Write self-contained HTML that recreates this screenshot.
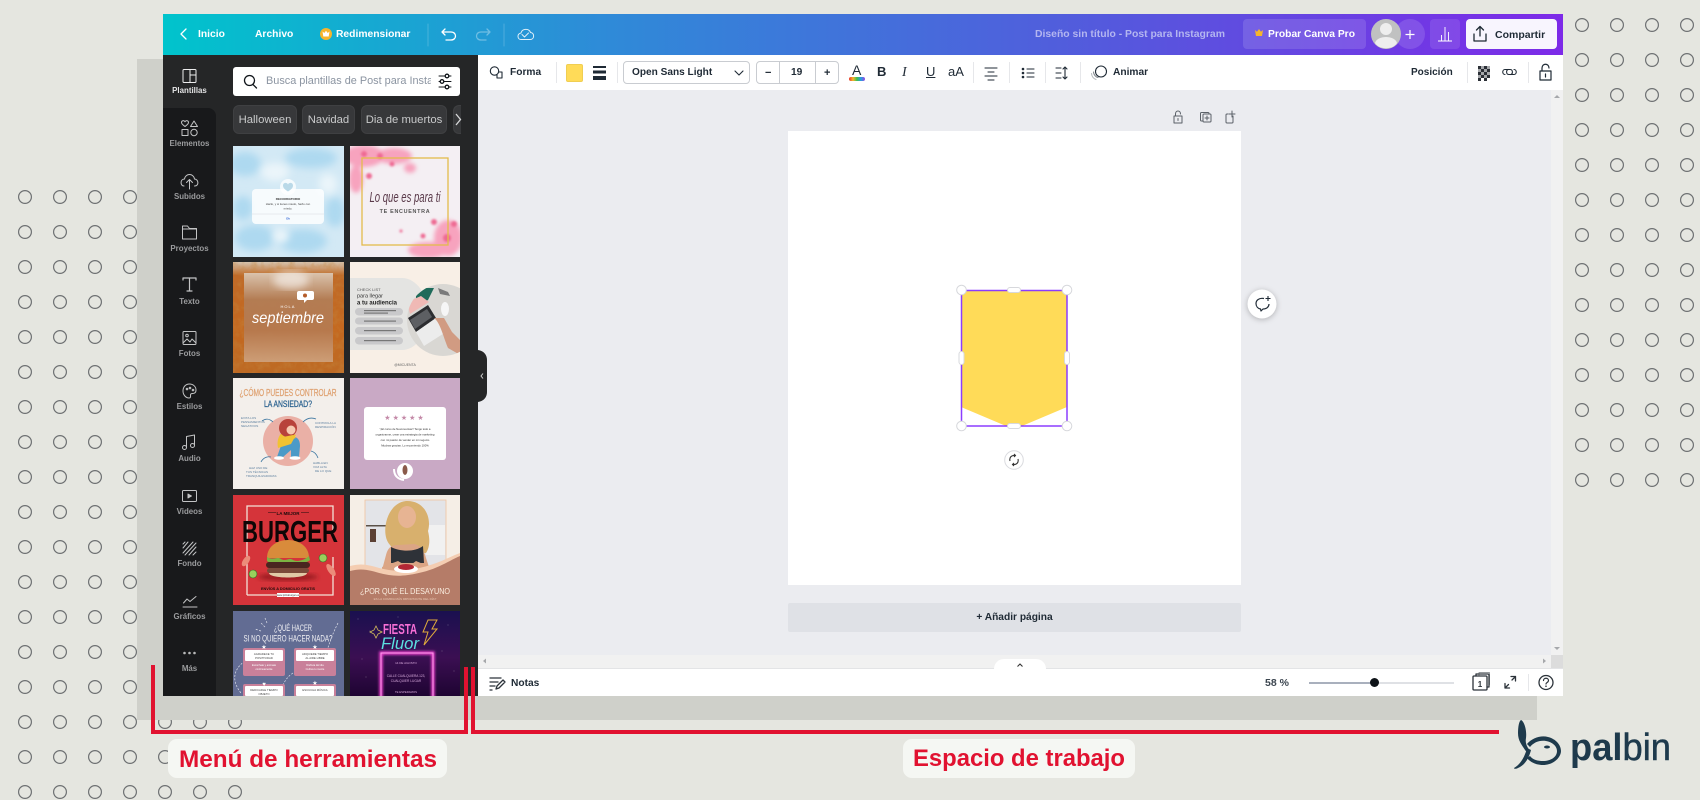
<!DOCTYPE html>
<html lang="es"><head><meta charset="utf-8"><title>Canva</title>
<style>
html,body{margin:0;padding:0;background:#e5e6e0}
#r{position:relative;width:1700px;height:800px;overflow:hidden;background:#e5e6e0;font-family:"Liberation Sans",sans-serif}
.a{position:absolute}
.t{position:absolute;white-space:nowrap;line-height:20px;height:20px}
.w{color:#fff;font-weight:bold;font-size:10.3px}
.d{color:#1f2a35;font-weight:bold;font-size:10.2px}
.l{position:absolute;left:163px;width:53px;text-align:center;font-size:7.9px;font-weight:bold;color:#9b9c9e;line-height:12px}
.chip{position:absolute;top:105px;height:29px;background:#37383a;border:1px solid #3f4042;box-sizing:border-box;border-radius:6px;color:#c9cacb;font-size:11.3px;line-height:29px;text-align:center;white-space:nowrap}
.th{position:absolute;display:block}
.div{position:absolute;width:1px;background:#e6e7ea}
svg text{font-family:"Liberation Sans",sans-serif}
</style></head><body><div id="r">

<svg class="a" style="left:0;top:0" width="1700" height="800" viewBox="0 0 1700 800">
<defs><pattern id="dots" x="7.5" y="179.5" width="35" height="35" patternUnits="userSpaceOnUse"><circle cx="17.5" cy="17.5" r="6.4" fill="none" stroke="#6d7072" stroke-width="1.2"/></pattern>
<pattern id="dots2" x="1564.5" y="7.5" width="35" height="35" patternUnits="userSpaceOnUse"><circle cx="17.5" cy="17.5" r="6.4" fill="none" stroke="#6d7072" stroke-width="1.2"/></pattern>
<filter id="b2"><feGaussianBlur stdDeviation="2"/></filter><filter id="b4"><feGaussianBlur stdDeviation="4"/></filter><filter id="b1"><feGaussianBlur stdDeviation="1"/></filter>
<filter id="n1" x="0" y="0" width="100%" height="100%"><feTurbulence type="fractalNoise" baseFrequency="0.16" numOctaves="3" seed="4"/><feColorMatrix values="0 0 0 0 .55  0 0 0 0 .24  0 0 0 0 .05  1.8 0 0 0 -.7"/></filter>
<filter id="gl" x="-30%" y="-30%" width="160%" height="160%"><feGaussianBlur stdDeviation="1.4"/></filter>
<clipPath id="c4"><circle cx="93" cy="58" r="36"/></clipPath>
</defs>
<rect x="7.5" y="179.5" width="140" height="525.5" fill="url(#dots)"/>
<rect x="7.5" y="704.5" width="245" height="95.5" fill="url(#dots)"/>
<rect x="1564.5" y="7.5" width="140" height="490" fill="url(#dots2)"/>
</svg>

<div class="a" style="left:137px;top:59px;width:1400px;height:661px;background:#cfd0ca"></div>

<!-- App -->
<div class="a" style="left:163px;top:14px;width:1400px;height:41px;background:linear-gradient(90deg,#00c4cc,#2f8ad8 32%,#5558dd 68%,#7d2ae8)"></div>
<div class="a" style="left:163px;top:55px;width:315px;height:641px;background:#252627"></div>
<div class="a" style="left:163px;top:108px;width:53px;height:588px;background:#18191b;border-top-right-radius:8px"></div>
<div class="a" style="left:478px;top:55px;width:1085px;height:35px;background:#fff"></div>
<div class="a" style="left:478px;top:90px;width:1085px;height:578px;background:#ebecf0"></div>
<div class="a" style="left:1551px;top:90px;width:12px;height:565px;background:#f1f1f1"></div>
<div class="a" style="left:478px;top:655px;width:1073px;height:13px;background:#f1f1f1"></div>
<div class="a" style="left:1551px;top:655px;width:12px;height:13px;background:#dcdcdc"></div>
<div class="a" style="left:478px;top:668px;width:1085px;height:28px;background:#fff;border-top:1px solid #e3e4e6;box-sizing:border-box"></div>
<div class="a" style="left:994px;top:659px;width:52px;height:10px;background:#fff;border-radius:14px 14px 0 0"></div>

<!-- Canvas -->
<div class="a" style="left:788px;top:131px;width:453px;height:454px;background:#fff"></div>
<div class="a" style="left:788px;top:603px;width:453px;height:29px;background:#dfe1e6;border-radius:2px;text-align:center;line-height:29px;font-size:10.2px;font-weight:bold;color:#1f2a35">+ Añadir página</div>

<!-- Top bar text -->
<div class="t w" style="left:198px;top:25px">Inicio</div>
<div class="t w" style="left:255px;top:25px">Archivo</div>
<div class="t w" style="left:336px;top:25px">Redimensionar</div>
<div class="t" style="left:1035px;top:25px;color:#b4b6f0;font-size:10.4px;font-weight:bold">Diseño sin título - Post para Instagram</div>
<div class="a" style="left:1243px;top:19px;width:123px;height:30px;border-radius:4px;background:rgba(255,255,255,.13)"></div>
<div class="t w" style="left:1268px;top:25px">Probar Canva Pro</div>
<div class="a" style="left:1395px;top:19px;width:30px;height:30px;border-radius:50%;background:rgba(255,255,255,.13)"></div>
<div class="a" style="left:1430px;top:19px;width:30px;height:30px;border-radius:4px;background:rgba(255,255,255,.1)"></div>
<div class="a" style="left:1466px;top:19px;width:91px;height:30px;border-radius:4px;background:#f8f5fe"></div>
<div class="t d" style="left:1495px;top:25px;font-size:10.5px">Compartir</div>

<!-- Toolbar text -->
<div class="t d" style="left:510px;top:63px">Forma</div>
<div class="a" style="left:566px;top:64px;width:17px;height:18px;background:#ffdb58;border-radius:2px;box-shadow:inset 0 0 0 1px rgba(0,0,0,.06)"></div>
<div class="a" style="left:623px;top:61px;width:127px;height:23px;border:1px solid #c9ccd1;border-radius:4px;box-sizing:border-box"></div>
<div class="t d" style="left:632px;top:63px;font-size:10.1px">Open Sans Light</div>
<div class="a" style="left:756px;top:61px;width:83px;height:23px;border:1px solid #c9ccd1;border-radius:4px;box-sizing:border-box"></div>
<div class="a" style="left:779px;top:61px;width:1px;height:23px;background:#c9ccd1"></div>
<div class="a" style="left:815px;top:61px;width:1px;height:23px;background:#c9ccd1"></div>
<div class="t d" style="left:791px;top:63px">19</div>
<div class="t d" style="left:765px;top:63px;font-size:11px">−</div>
<div class="t d" style="left:824px;top:63px;font-size:11px">+</div>
<div class="t" style="left:877px;top:62px;font-size:13px;font-weight:bold;color:#1f2a35">B</div>
<div class="t" style="left:902px;top:63px;font-size:14px;font-style:italic;font-family:'Liberation Serif',serif;color:#1f2a35">I</div>
<div class="t" style="left:926px;top:62px;font-size:13px;color:#1f2a35;text-decoration:underline">U</div>
<div class="t" style="left:948px;top:62px;font-size:13px;color:#1f2a35">aA</div>
<div class="t d" style="left:1113px;top:63px">Animar</div>
<div class="t d" style="left:1411px;top:63px;font-size:10px">Posición</div>
<div class="div" style="left:556px;top:62px;height:21px"></div><div class="div" style="left:617px;top:62px;height:21px"></div>
<div class="div" style="left:973px;top:62px;height:21px"></div><div class="div" style="left:1009px;top:62px;height:21px"></div>
<div class="div" style="left:1045px;top:62px;height:21px"></div><div class="div" style="left:1080px;top:62px;height:21px"></div>
<div class="div" style="left:1467px;top:62px;height:21px"></div><div class="div" style="left:1528px;top:62px;height:21px"></div>
<div class="t" style="left:852px;top:60px;font-size:14px;color:#1f2a35">A</div>
<div class="a" style="left:849px;top:77px;width:16px;height:4px;border-radius:2px;background:linear-gradient(90deg,#e5342c,#f7b52b,#3cc04f,#2b9be5,#9a45e0)"></div>

<!-- Footer text -->
<div class="t d" style="left:511px;top:674px">Notas</div>
<div class="t" style="left:1265px;top:673px;font-size:10.5px;font-weight:bold;color:#3c4650">58 %</div>
<div class="a" style="left:1309px;top:682px;width:65px;height:1.5px;background:#a9b0bd"></div>
<div class="a" style="left:1374px;top:682px;width:80px;height:1.5px;background:#dfe1e5"></div>
<div class="a" style="left:1369.5px;top:677.5px;width:9px;height:9px;border-radius:50%;background:#0e1318"></div>
<div class="div" style="left:1528px;top:674px;height:17px"></div>

<!-- Search + chips -->
<div class="a" style="left:233px;top:67px;width:227px;height:29px;background:#fff;border-radius:3px"></div>
<div class="t" style="left:266px;top:71px;width:165px;overflow:hidden;font-size:10.9px;color:#8b94a1">Busca plantillas de Post para Instagram</div>
<div class="chip" style="left:233px;width:64px">Halloween</div>
<div class="chip" style="left:302px;width:53px">Navidad</div>
<div class="chip" style="left:361px;width:86px">Dia de muertos</div>
<div class="chip" style="left:453px;width:8px;border-right:0;border-radius:6px 0 0 6px"></div>

<!-- Rail labels -->
<div class="l" style="top:85px;color:#e4e4e5">Plantillas</div>
<div class="l" style="top:138px">Elementos</div>
<div class="l" style="top:191px">Subidos</div>
<div class="l" style="top:243px">Proyectos</div>
<div class="l" style="top:296px">Texto</div>
<div class="l" style="top:348px">Fotos</div>
<div class="l" style="top:401px">Estilos</div>
<div class="l" style="top:453px">Audio</div>
<div class="l" style="top:506px">Videos</div>
<div class="l" style="top:558px">Fondo</div>
<div class="l" style="top:611px">Gráficos</div>
<div class="l" style="top:663px">Más</div>

<!-- Thumbs -->
<svg class="th" style="left:233px;top:146px" width="111" height="111" viewBox="0 0 111 111"><rect width="111" height="111" fill="#d3e9f5"/><g filter="url(#b4)" fill="#aed9f0"><ellipse cx="12" cy="18" rx="16" ry="12"/><ellipse cx="78" cy="12" rx="26" ry="10"/><ellipse cx="22" cy="92" rx="20" ry="13"/><ellipse cx="70" cy="95" rx="24" ry="12"/><ellipse cx="102" cy="66" rx="10" ry="15"/><ellipse cx="10" cy="62" rx="10" ry="12"/></g><g filter="url(#b4)" fill="#ebf5fa"><ellipse cx="42" cy="26" rx="14" ry="9"/><ellipse cx="95" cy="38" rx="9" ry="10"/><ellipse cx="48" cy="90" rx="8" ry="7"/></g><circle cx="55" cy="41" r="8" fill="#fff" opacity=".75"/><rect x="19" y="43" width="72" height="35" rx="4" fill="#fff" opacity=".82"/><path d="M55 45.5c-3-2-5-3.5-5-6 0-3 4-3.500 5-1 1-2.500 5-2 5 1 0 2.500-2 4-5 6z" fill="#bad9e8"/><text x="55" y="54" font-size="3" font-weight="bold" text-anchor="middle" fill="#333">RECORDATORIO</text><text x="55" y="59" font-size="2.900" text-anchor="middle" fill="#444">Hazlo, y si tienes miedo, hazlo con</text><text x="55" y="63.500" font-size="2.900" text-anchor="middle" fill="#444">miedo.</text><path d="M19 68h72" stroke="#cfd3d6" stroke-width=".4"/><text x="55" y="73.500" font-size="3" font-weight="bold" text-anchor="middle" fill="#3b6dd8">Ok</text></svg>

<svg class="th" style="left:350px;top:146px" width="110" height="111" viewBox="0 0 110 111"><rect width="110" height="111" fill="#f4eff3"/><g filter="url(#b2)" fill="#f7a3be"><ellipse cx="14" cy="10" rx="20" ry="11"/><ellipse cx="44" cy="10" rx="18" ry="8"/><ellipse cx="6" cy="33" rx="7" ry="14"/><ellipse cx="98" cy="92" rx="14" ry="18"/><ellipse cx="78" cy="104" rx="20" ry="8"/><ellipse cx="60" cy="22" rx="6" ry="5"/></g><g fill="#ee6a93" filter="url(#b1)"><circle cx="19" cy="30" r="3"/><circle cx="30" cy="10" r="3"/><circle cx="14" cy="8" r="3"/><circle cx="97" cy="92" r="4"/><circle cx="84" cy="76" r="3"/><circle cx="73" cy="90" r="2.500"/><circle cx="51" cy="85" r="1.500"/><circle cx="42" cy="18" r="2.500"/><circle cx="104" cy="78" r="3"/></g><rect x="12" y="12" width="86" height="87" fill="none" stroke="#e3bb4c" stroke-width="1.300"/><text x="55" y="56" font-size="15" font-style="italic" font-family="Liberation Serif" text-anchor="middle" fill="#5a3a4a" textLength="71" lengthAdjust="spacingAndGlyphs">Lo que es para ti</text><text x="55" y="67" font-size="5.400" font-weight="bold" font-family="Liberation Serif" text-anchor="middle" fill="#555" letter-spacing=".7">TE ENCUENTRA</text></svg>

<svg class="th" style="left:233px;top:262px" width="111" height="111" viewBox="0 0 111 111"><defs><linearGradient id="g3" x1="0" y1="0" x2="0" y2="1"><stop offset="0" stop-color="#d6c4b0"/><stop offset=".12" stop-color="#bf6a28"/><stop offset=".6" stop-color="#c4681f"/><stop offset="1" stop-color="#bd6a24"/></linearGradient><linearGradient id="g3b" x1="0" y1="0" x2="0" y2="1"><stop offset="0" stop-color="#dcc9b6"/><stop offset=".3" stop-color="#b27d56"/><stop offset=".65" stop-color="#b67a50"/><stop offset="1" stop-color="#cea17c"/></linearGradient></defs><rect width="111" height="111" fill="url(#g3)"/><rect width="111" height="111" filter="url(#n1)" opacity=".55"/><rect x="11" y="11" width="89" height="89" fill="url(#g3b)" opacity=".93"/><ellipse cx="58" cy="18" rx="18" ry="9" fill="#fff" opacity=".55" filter="url(#b4)"/><path d="M66 29h13a2 2 0 0 1 2 2v5a2 2 0 0 1-2 2h-5l-3 3v-3h-5a2 2 0 0 1-2-2v-5a2 2 0 0 1 2-2z" fill="#fff"/><circle cx="72" cy="33.500" r="2" fill="#b55d2a"/><text x="55" y="46" font-size="4" text-anchor="middle" fill="#fff" letter-spacing="1">HOLA</text><text x="55" y="61" font-size="16" font-style="italic" font-family="Liberation Serif" text-anchor="middle" fill="#fff" textLength="72" lengthAdjust="spacingAndGlyphs">septiembre</text></svg>

<svg class="th" style="left:350px;top:262px" width="110" height="111" viewBox="0 0 110 111"><rect width="110" height="111" fill="#f8efe6"/><path d="M0 16h52c14 0 26 16 26 36s-12 36-26 36H0z" fill="#e4e4e2"/><circle cx="93" cy="58" r="36" fill="#d9d7d3"/><g clip-path="url(#c4)"><path d="M66 26h18l-6 12-12 6z" fill="#1f6b5a"/><path d="M57 40l14-6 8 6-19 12z" fill="#f0b9b5"/><path d="M58 56l20-13 8 13-20 14z" fill="#2c2d30"/><path d="M60 58l17-11 5 8-17 12z" fill="#5d5f63"/><path d="M66 70l20-14 10 14-22 14z" fill="#ececec"/><path d="M84 56c6 4 9 18 14 30l14 8v-14l-10-10-8-14z" fill="#d19b82"/><ellipse cx="95" cy="47" rx="4" ry="7" fill="#f6f6f6"/><path d="M88 26l10 4 2 4-10-2z" fill="#7a7a7a"/></g><text x="7" y="29" font-size="4" font-family="Liberation Serif" fill="#555">CHECK LIST</text><text x="7" y="35.500" font-size="5.500" font-family="Liberation Serif" fill="#333">para llegar</text><text x="7" y="42.500" font-size="6" font-weight="bold" font-family="Liberation Serif" fill="#222">a tu audiencia</text><g fill="#c9c9cb"><rect x="5" y="46" width="48" height="7.500" rx="3.700"/><rect x="5" y="55.500" width="48" height="7" rx="3.500"/><rect x="5" y="65" width="48" height="7.500" rx="3.700"/><rect x="5" y="75" width="48" height="7.500" rx="3.700"/></g><g fill="#777"><rect x="14" y="48" width="32" height="1.200"/><rect x="14" y="50.500" width="24" height="1.200"/><rect x="14" y="58.500" width="32" height="1.200"/><rect x="14" y="68" width="32" height="1.200"/><rect x="14" y="78" width="32" height="1.200"/></g><text x="55" y="104" font-size="3.500" text-anchor="middle" fill="#666">@MICUENTA</text></svg>

<svg class="th" style="left:233px;top:378px" width="111" height="111" viewBox="0 0 111 111"><rect width="111" height="111" fill="#f3efeb"/><text x="55" y="18" font-size="10" text-anchor="middle" fill="#dfa272" stroke="#dfa272" stroke-width=".25" textLength="97" lengthAdjust="spacingAndGlyphs">¿CÓMO PUEDES CONTROLAR</text><text x="55" y="29" font-size="9.500" text-anchor="middle" fill="#29618f" stroke="#29618f" stroke-width=".25" textLength="48" lengthAdjust="spacingAndGlyphs">LA ANSIEDAD?</text><circle cx="55" cy="63" r="25" fill="#eab0a6"/><path d="M50 62C60 56 67 58 67 68L66 79 58 79 58 72 50 79 44 79Z" fill="#4c9ac7"/><path d="M45 70C43 60 48 53 54 53L63 57 58 66Z" fill="#f1c232"/><ellipse cx="55" cy="50" rx="9" ry="9" fill="#b8423a"/><circle cx="58" cy="52" r="4.500" fill="#f6c9b0"/><path d="M50 59l10-2 3 3-10 3z" fill="#f1c232"/><ellipse cx="46" cy="80" rx="5" ry="1.800" fill="#fff"/><ellipse cx="62" cy="80" rx="5.500" ry="1.800" fill="#fff"/><g font-size="3" fill="#5b7e9e"><text x="8" y="41">EVITA LOS</text><text x="8" y="45">PENSAMIENTOS</text><text x="8" y="49">NEGATIVOS</text><text x="82" y="46">CONTROLA LA</text><text x="82" y="50">RESPIRACIÓN</text><text x="16" y="91">HAZ USO DE</text><text x="13" y="95">TUS TÉCNICAS</text><text x="13" y="99">TRANQUILIZADORAS</text><text x="80" y="86">HABLA EN</text><text x="80" y="90">VOZ ALTA</text><text x="82" y="94">DE LO QUE</text></g><g fill="none" stroke="#39749f" stroke-width=".8"><path d="M29 43c4-3 8-2 11 1"/><path d="M70 44c4-4 8-5 13-3"/><path d="M28 84c2-4 6-6 10-5"/><path d="M78 73c4 1 6 4 7 7"/></g></svg>

<svg class="th" style="left:350px;top:378px" width="110" height="111" viewBox="0 0 110 111"><rect width="110" height="111" fill="#c9a9c5"/><rect x="14" y="29" width="82" height="53" rx="3" fill="#fff"/><text x="55" y="42" font-size="7" text-anchor="middle" fill="#c48aa8" letter-spacing="2">★★★★★</text><g font-size="2.800" text-anchor="middle" fill="#333"><text x="55" y="52">"¡El curso de Neuroventas!! Tengo todo a</text><text x="55" y="57.500">organizarme, crear una estrategia de marketing</text><text x="55" y="63">con mi pasión de vender en mi negocio</text><text x="55" y="68.500">Muchas gracias. Lo recomiendo 100%</text></g><circle cx="55" cy="93" r="8" fill="#fff"/><ellipse cx="55" cy="92" rx="2.500" ry="5" fill="#8a5a4a"/><path d="M44 91c0 6 3 10 10 11" fill="none" stroke="#fff" stroke-width="2"/></svg>

<svg class="th" style="left:233px;top:495px" width="111" height="110" viewBox="0 0 111 110"><rect width="111" height="110" fill="#d5343a"/><path d="M14 100V11h86v30M14 100h86V62" fill="none" stroke="#f3e2d8" stroke-width="1.300"/><text x="55" y="20" font-size="4.500" font-weight="bold" text-anchor="middle" fill="#1c0c0c">LA MEJOR</text><path d="M35 17.500h8M68 17.500h8" stroke="#1c0c0c" stroke-width=".6"/><text x="9" y="47" font-size="31" font-weight="bold" fill="#0e0606" textLength="96" lengthAdjust="spacingAndGlyphs">BURGER</text><ellipse cx="55" cy="82" rx="30" ry="4" fill="#9c1d23" filter="url(#b2)"/><path d="M34 63c0-24 42-24 42 0z" fill="#d98b3b"/><path d="M34 62c6 4 10-1 14 2 5 3 8-2 12 1 4 2 10 1 16-4l1 4c-4 5-38 6-43 1z" fill="#7cb342"/><rect x="33" y="67" width="44" height="6" rx="3" fill="#4a2520"/><rect x="34" y="73" width="42" height="5" rx="2.500" fill="#7a4a3a"/><path d="M36 78h38c0 6-38 6-38 0z" fill="#e0c9a6"/><ellipse cx="13" cy="66" rx="3" ry="6" fill="#ec8c7a" transform="rotate(35 13 66)"/><ellipse cx="98" cy="75" rx="3" ry="7" fill="#ec8c7a" transform="rotate(-35 98 75)"/><circle cx="20" cy="79" r="4" fill="#99cf5c" stroke="#326b25" stroke-width=".6"/><circle cx="90" cy="63" r="4" fill="#99cf5c" stroke="#326b25" stroke-width=".6"/><text x="55" y="95" font-size="3.800" font-weight="bold" text-anchor="middle" fill="#1c0c0c">ENVÍOS A DOMICILIO GRATIS</text><rect x="44" y="98" width="22" height="4" fill="#fff"/><text x="55" y="101" font-size="2.500" text-anchor="middle" fill="#333">www.pizzaburger.es</text></svg>

<svg class="th" style="left:350px;top:495px" width="110" height="110" viewBox="0 0 110 110"><rect width="110" height="110" fill="#f5eee6"/><rect x="15" y="5" width="81" height="75" fill="#e3e4e8" stroke="#f0c39f" stroke-width=".8"/><rect x="16" y="30" width="20" height="1.500" fill="#5b5148"/><rect x="20" y="34" width="6" height="13" fill="#5c4034"/><rect x="76" y="30" width="19" height="30" fill="#f1f1f1"/><path d="M40 50C30 40 36 8 56 6c18-1 26 16 22 30 2 8 2 16-2 22H46z" fill="#d8b06d"/><ellipse cx="57" cy="22" rx="9" ry="11" fill="#e7b493"/><path d="M36 60c2-8 6-10 12-10l16-1c6 1 10 6 12 14l4 12H32z" fill="#dba585"/><path d="M41 52c10 5 24 5 32-1l1 17H41z" fill="#2e3238"/><path d="M32 72l16-6 10 6 8-6 14 6-2 8H32z" fill="#dba585"/><path d="M0 75c22-6 30 8 58 4s40-16 52-20v51H0z" fill="#b57c68"/><path d="M0 71c22-6 30 8 58 4 28-4 38-12 52-17v3c-14 6-24 15-52 19-28 4-36-10-58-4z" fill="#f4cdb2"/><ellipse cx="56" cy="74" rx="12" ry="4" fill="#fff"/><ellipse cx="56" cy="72" rx="8" ry="3" fill="#b32735"/><text x="55" y="99" font-size="8" text-anchor="middle" fill="#fbeee0" textLength="90" lengthAdjust="spacingAndGlyphs">¿POR QUÉ EL DESAYUNO</text><text x="55" y="105" font-size="3" text-anchor="middle" fill="#e9c8b4">ES LA COMIDA MÁS IMPORTANTE DEL DÍA?</text></svg>

<svg class="th" style="left:233px;top:611px" width="111" height="85" viewBox="0 0 111 85"><rect width="111" height="85" fill="#626c93"/><text x="60" y="20" font-size="9" text-anchor="middle" fill="#f0f0f4" textLength="38" lengthAdjust="spacingAndGlyphs">¿QUÉ HACER</text><text x="55" y="30.500" font-size="9" text-anchor="middle" fill="#f0f0f4" textLength="89" lengthAdjust="spacingAndGlyphs">SI NO QUIERO HACER NADA?</text><g stroke="#dfe1ea" stroke-width=".7" fill="none" stroke-dasharray="2 1.500"><path d="M32 16l-4-4M34 12l-2-5M28 20l-6-2"/><path d="M105 12C96 30 96 36 90 50"/><path d="M12 50C-2 60 0 72 8 82"/><path d="M60 62c-6 4-8 8-10 12"/></g><g fill="#c9809a"><rect x="10" y="37" width="42" height="28" rx="2"/><rect x="61" y="37" width="42" height="28" rx="2"/><rect x="10" y="73" width="42" height="20" rx="2"/><rect x="61" y="73" width="42" height="20" rx="2"/></g><g fill="#fff"><rect x="12" y="39" width="38" height="11" rx="1"/><rect x="63" y="39" width="38" height="11" rx="1"/><rect x="12" y="75" width="38" height="10" rx="1"/><rect x="63" y="75" width="38" height="10" rx="1"/></g><g fill="#fff" font-size="6" text-anchor="middle"><text x="31" y="38">★</text><text x="82" y="38">★</text><text x="31" y="75">♥</text><text x="82" y="74">★</text></g><g font-size="2.800" text-anchor="middle" fill="#444"><text x="31" y="44">AGRADECE TU</text><text x="31" y="48">POSITIVIDAD</text><text x="82" y="44">ADQUIERE TIEMPO</text><text x="82" y="48">AL AIRE LIBRE</text><text x="31" y="80">DEDICARLE TIEMPO</text><text x="31" y="84">OBJETO</text><text x="82" y="80">ESCUCHA MÚSICA</text></g><g font-size="2.600" text-anchor="middle" fill="#fff"><text x="31" y="55">Escúchate y anímate</text><text x="31" y="59">continuamente</text><text x="82" y="55">Disfruta del día</text><text x="82" y="59">Cultiva tu mente</text></g></svg>

<svg class="th" style="left:350px;top:611px" width="110" height="85" viewBox="0 0 110 85"><defs><linearGradient id="g10" x1="0" y1="0" x2="0" y2="1"><stop offset="0" stop-color="#1a1050"/><stop offset=".55" stop-color="#3b0f52"/><stop offset="1" stop-color="#1e0432"/></linearGradient></defs><rect width="110" height="85" fill="url(#g10)"/><g fill="#ddd" opacity=".7"><circle cx="8" cy="8" r=".4"/><circle cx="20" cy="20" r=".4"/><circle cx="98" cy="14" r=".4"/><circle cx="92" cy="40" r=".4"/><circle cx="12" cy="48" r=".4"/><circle cx="104" cy="60" r=".4"/><circle cx="48" cy="6" r=".4"/><circle cx="16" cy="66" r=".4"/></g><rect x="31" y="42" width="52" height="60" fill="none" stroke="#f03fd0" stroke-width="3.500" filter="url(#gl)"/><rect x="31" y="42" width="52" height="60" fill="none" stroke="#ff9bec" stroke-width="1"/><text x="50" y="23" font-size="15" font-weight="bold" text-anchor="middle" fill="#f76fd6" textLength="34" lengthAdjust="spacingAndGlyphs">FIESTA</text><text x="50" y="38" font-size="17" font-style="italic" font-family="Liberation Serif" text-anchor="middle" fill="#5ce0e0" textLength="38" lengthAdjust="spacingAndGlyphs">Fluor</text><path d="M78 9h9l-5 9h5l-13 16 4-13h-5z" fill="none" stroke="#e0ac3c" stroke-width="1"/><path d="M26 15l2 4 4 2-4 2-2 4-2-4-4-2 4-2z" fill="none" stroke="#d8c25c" stroke-width=".8"/><g fill="#d5a8d9" text-anchor="middle"><text x="56" y="53" font-size="3">14 DE AGOSTO</text><text x="56" y="66" font-size="3.200">CALLE CUALQUIERA 123,</text><text x="56" y="71" font-size="3.200">CUALQUIER LUGAR</text><text x="56" y="82" font-size="2.800">TE ESPERAMOS</text></g></svg>

<!-- Icons overlay -->
<svg class="a" style="left:0;top:0;pointer-events:none" width="1700" height="800" viewBox="0 0 1700 800">
<!-- top bar -->
<g fill="none" stroke="#fff" stroke-width="1.300" stroke-linecap="round" stroke-linejoin="round">
<path d="M186 29l-5 5 5 5"/>
<path d="M445 29l-3 3 3 3M442 32h9c6 0 6 8 0 8h-5"/>
<path d="M487 29l3 3-3 3M490 32h-9c-6 0-6 8 0 8h5" opacity=".35"/>
<path d="M521 39.500c-3.500 0-4.500-5.500 0-6.500 1-4.500 8-5 9.500-.5 4 0 4.500 7-.5 7zM522 34.500l2.500 2.500 4-4" stroke-width="1" opacity=".85"/>
<path d="M428 24v22M504 24v22" stroke="#fff" stroke-opacity=".2" stroke-width="1"/>
</g>
<circle cx="326" cy="34" r="6" fill="#f7b52b"/><path d="M322.500 31.500l1.800 1.500 1.700-2.300 1.700 2.300 1.800-1.500-.8 5h-5.400z" fill="#fff"/>
<path d="M1255 30l2 1.800 2-2.800 2 2.800 2-1.800-1 6h-6z" fill="#f7b52b"/>
<path d="M1410 30v9M1405.500 34.500h9" stroke="#fff" stroke-width="1.200"/>
<circle cx="1386" cy="34" r="15" fill="#c0c1c1"/><circle cx="1386" cy="29" r="6" fill="#eee"/><path d="M1375 43c2-8 20-8 22 0-4 7-18 7-22 0z" fill="#eee"/>
<path d="M1438 41h14M1441.500 41v-6M1445 41V27M1448.500 41v-9" stroke="#fff" stroke-width=".9" fill="none"/>
<g fill="none" stroke="#1f2a35" stroke-width="1.300" stroke-linecap="round" stroke-linejoin="round"><path d="M1474 34v7h12v-7M1480 36v-9M1476.500 30l3.500-3.500 3.500 3.500"/></g>

<!-- rail -->
<g fill="none" stroke="#c3c4c5" stroke-width="1" stroke-linejoin="round" stroke-linecap="round">
<g stroke="#ededee"><rect x="183" y="69.500" width="13" height="13" rx="1"/><path d="M190 69.500v13M190 75h6"/></g>
<path d="M185 126.500c-2-1.500-3.500-2.500-3.500-4 0-2 2.500-2.500 3.500-.8 1-1.700 3.500-1.200 3.500.8 0 1.500-1.500 2.500-3.500 4zM194 121l3.500 5.500h-7z"/><rect x="182" y="129.500" width="6" height="6"/><circle cx="194" cy="132.500" r="3.200"/>
<path d="M184 186c-4 0-4-7 .5-7 1-6 9-6 10 0 4 0 5 7 0 7M189.500 189v-9M186.500 182.500l3-3 3 3"/>
<path d="M182.500 239v-13h5l2 2.500h7v10.500zM182.500 229h14"/>
<path d="M183 280v-2h13v2M189.500 278v13M187 291h5" stroke-width="1.200"/>
<rect x="183" y="331.500" width="13" height="13" rx="1"/><circle cx="187" cy="335.500" r="1.300"/><path d="M183 343l4-4 3 3 2-3 4 4"/>
<path d="M189.500 384c-4 0-6.500 3-6.500 7s3 7 6 7c2 0 1.500-2 1.500-3s1-1.500 2-1.500c2 0 3.500-1 3.500-3.500 0-3.500-3-6-6.500-6z"/><circle cx="187" cy="389" r=".8"/><circle cx="190" cy="388" r=".8"/><circle cx="193" cy="390" r=".8"/>
<path d="M186.500 447v-10.500l8-1.500v10"/><circle cx="184.500" cy="447.500" r="2"/><circle cx="192.500" cy="445.500" r="2"/>
<rect x="182.500" y="490.500" width="14" height="11" rx="1"/><path d="M188 494v4l3.500-2z" fill="#c3c4c5"/>
<path d="M183 548l5-6M183 553l10-11M185 555l11-12M189 555l7-8M193 555l3-3M183 544l2-2" stroke-width="1"/>
<path d="M183 607h14M183.500 603l3.500-4 3 2.500 6-5"/>
</g>
<g fill="#b8b9ba"><circle cx="184.500" cy="653" r="1.300"/><circle cx="189.500" cy="653" r="1.300"/><circle cx="194.500" cy="653" r="1.300"/></g>
<!-- search icons -->
<g fill="none" stroke="#10151a" stroke-width="1.300" stroke-linecap="round"><circle cx="249.500" cy="80.500" r="5"/><path d="M253 84.500l3.500 3.500"/><path d="M439 76h12M439 81.500h12M439 87h12" stroke-width="1"/><circle cx="447" cy="76" r="1.800" fill="#fff"/><circle cx="442" cy="81.500" r="1.800" fill="#fff"/><circle cx="447" cy="87" r="1.800" fill="#fff"/></g>
<path d="M456 114l4.500 5.500-4.500 5.500" fill="none" stroke="#d7d8d9" stroke-width="1.300"/>
<!-- collapse -->
<path d="M478 350c6 1 9 5 9 10v32c0 5-3 9-9 10z" fill="#252627"/><path d="M483 373.500l-2 2.500 2 2.500" fill="none" stroke="#d0d0d0" stroke-width="1"/>
<!-- toolbar -->
<g fill="none" stroke="#1f2a35" stroke-width="1.100" stroke-linecap="round" stroke-linejoin="round">
<circle cx="494.500" cy="71" r="4.200"/><path d="M497 75v3h5v-6h-2.500"/>
<path d="M735 71l4 4 4-4"/>
<path d="M985 68h12M988 72h6M985 76h12M988 80h6"/>
<path d="M1027 69h7M1027 73h7M1027 77h7"/>
<path d="M1056 68h5M1056 73h5M1056 78h5M1065 67v12M1063 69l2-2 2 2M1063 77l2 2 2-2"/>
<circle cx="1101" cy="71.500" r="5.500"/><path d="M1098 77.500a6 6 0 0 1-4.500-5.500" opacity=".55"/><path d="M1096 79.500a7 7 0 0 1-4.500-6" opacity=".3"/>
<path d="M1505 74.500c-3 0-3-5 0-5h5c3 0 3 4 1 5M1514 69.500c3 0 3 5 0 5h-5c-3 0-3-4-1-5"/>
<path d="M1540 71v9h11v-9zM1542 71v-3c0-5 7-5 7 0M1545.500 74v3" stroke-width="1.200"/>
</g>
<g fill="#1f2a35"><rect x="593" y="66" width="13" height="2"/><rect x="593" y="70.500" width="13" height="3"/><rect x="593" y="76" width="13" height="4"/><circle cx="1023" cy="69" r="1.300"/><circle cx="1023" cy="73" r="1.300"/><circle cx="1023" cy="77" r="1.300"/></g>
<g fill="#2b2f36"><rect x="1478" y="66" width="3" height="3"/><rect x="1484" y="66" width="3" height="3"/><rect x="1481" y="69" width="3" height="3"/><rect x="1487" y="69" width="3" height="3"/><rect x="1478" y="72" width="3" height="3"/><rect x="1484" y="72" width="3" height="3"/><rect x="1481" y="75" width="3" height="3"/><rect x="1487" y="75" width="3" height="3"/><rect x="1478" y="78" width="3" height="3"/><rect x="1484" y="78" width="3" height="3"/></g>
<g fill="#a5a7aa"><rect x="1481" y="66" width="3" height="3"/><rect x="1487" y="66" width="3" height="3"/><rect x="1478" y="69" width="3" height="3"/><rect x="1484" y="69" width="3" height="3"/><rect x="1481" y="72" width="3" height="3"/><rect x="1487" y="72" width="3" height="3"/><rect x="1478" y="75" width="3" height="3"/><rect x="1484" y="75" width="3" height="3"/></g>
<!-- page actions -->
<g fill="none" stroke="#5b6168" stroke-width="1" stroke-linecap="round" stroke-linejoin="round">
<path d="M1174 116v7h8v-7zM1175.500 116v-2c0-4 5-4 5 0M1178 118.500v2"/>
<rect x="1203" y="114" width="8" height="8" rx="1"/><path d="M1203 121h-1.500a1 1 0 0 1-1-1v-6.500a1 1 0 0 1 1-1h6.500a1 1 0 0 1 1 1V114M1207 116v4M1205 118h4"/>
<path d="M1233 116v6a1 1 0 0 1-1 1h-5a1 1 0 0 1-1-1v-7a1 1 0 0 1 1-1h1M1232 111v6M1229 114h6"/>
</g>
<!-- scroll arrows -->
<g fill="#a6a8ab"><path d="M1557 95l3 3h-6z"/><path d="M1557 650l3-3h-6z"/><path d="M486 658.500v5l-3-2.500z"/><path d="M1543 658.500v5l3-2.500z"/></g>
<path d="M1017.500 666.500l2.500-2.500 2.500 2.500" fill="none" stroke="#333" stroke-width="1.100"/>
<!-- footer icons -->
<g fill="none" stroke="#2c333a" stroke-width="1.300" stroke-linecap="round" stroke-linejoin="round">
<path d="M490 678h11M490 682h8M490 686h5M490 690h2M496 689l1-3 6-6 2 2-6 6z"/>
<rect x="1473" y="676" width="14" height="14" rx="1"/><path d="M1476 676v-2h12a1 1 0 0 1 1 1v12h-2"/><path d="M1479 675.500v-3h10.500v12" opacity=".5" stroke-width=".9"/>
<path d="M1512 680l3.500-3.500M1511 676.500h4.500v4.500M1505 688l3.500-3.500M1505 683.500v4.500h4.500"/>
<circle cx="1546" cy="682.500" r="7"/><path d="M1543.500 680.500c0-3 5-3 5 0 0 2-2.500 2-2.500 3.500" stroke-width="1.200"/><circle cx="1546" cy="686.200" r=".4" stroke-width=".8"/>
</g>
<text x="1480" y="687" font-size="8" font-weight="bold" text-anchor="middle" fill="#2c333a">1</text>

<!-- shape -->
<path d="M961 290H1067V407L1022 426H1006L961 407Z" fill="#ffdb58"/>
<rect x="961.500" y="290.500" width="105.500" height="135.500" fill="none" stroke="#8b3dff" stroke-width="1.500"/>
<g fill="#fff" stroke="#d7d8dc" stroke-width="1"><circle cx="961.500" cy="290" r="4.800"/><circle cx="1067" cy="290" r="4.800"/><circle cx="961.500" cy="426" r="4.800"/><circle cx="1067" cy="426" r="4.800"/><rect x="1007.500" y="287.500" width="13" height="5" rx="2.500"/><rect x="1007.500" y="423.500" width="13" height="5" rx="2.500"/><rect x="959" y="351.500" width="5" height="13" rx="2.500"/><rect x="1064.500" y="351.500" width="5" height="13" rx="2.500"/><circle cx="1014" cy="460" r="9.300" stroke="#dadbdf"/></g>
<g fill="none" stroke="#333" stroke-width="1.100"><path d="M1010 461c-1-4 2-6 5-5.500M1018 459c1 4-2 6-5 5.500"/><path d="M1014 454l1.500 1.500-1.500 1.500M1014 466l-1.500-1.500 1.500-1.500"/></g>
<circle cx="1262" cy="304" r="14.500" fill="#fff" style="filter:drop-shadow(0 1px 3px rgba(0,0,0,.25))"/>
<path d="M1264 298.500c-5-1-8 2-8 5s2 5 4.500 5.500l.5 2 2-2c4 0 6-2.500 6-5" fill="none" stroke="#1f2a35" stroke-width="1.200" stroke-linejoin="round"/><path d="M1268 296v5M1265.500 298.500h5" stroke="#1f2a35" stroke-width="1.100"/>

<!-- red brackets -->
<g fill="none" stroke="#e11230" stroke-width="4"><path d="M153 665V732H466V667"/><path d="M473 667V732H1499"/></g>
<rect x="168" y="739" width="279" height="39" rx="9" fill="#f5f7f3"/>
<rect x="903" y="739" width="232" height="39" rx="9" fill="#f5f7f3"/>
<text x="179" y="767" font-size="24" font-weight="bold" fill="#e11230" textLength="258" lengthAdjust="spacingAndGlyphs">Menú de herramientas</text>
<text x="913" y="766" font-size="24" font-weight="bold" fill="#e11230" textLength="212" lengthAdjust="spacingAndGlyphs">Espacio de trabajo</text>

<!-- palbin -->
<g fill="#1e3a4c"><path d="M1521 720c3 1 6 10 5 18-1 5 1 8 2 10 2 2-1 5-3 2-3-5-7-9-7-17 0-6 1-12 3-13z"/><path d="M1527 748c-2 8-6 16-13 20 0 1 2 1 4 0 7-3 11-10 13-18z"/>
<path d="M1527 744c5-6 14-9 21-7 8 2 13 8 13 14s-7 14-18 14c-7 0-13-3-16-7l3-2c3 4 8 5 13 5 8 0 14-4 14-10 0-5-5-9-11-10-6-1-12 1-16 6z"/><ellipse cx="1547" cy="747" rx="3" ry="1.500"/></g>
<text x="1570" y="760" font-size="38" fill="#1e3a4c" textLength="101" lengthAdjust="spacingAndGlyphs"><tspan font-weight="bold">pal</tspan><tspan stroke="#1e3a4c" stroke-width=".5">bin</tspan></text>
</svg>
</div></body></html>
